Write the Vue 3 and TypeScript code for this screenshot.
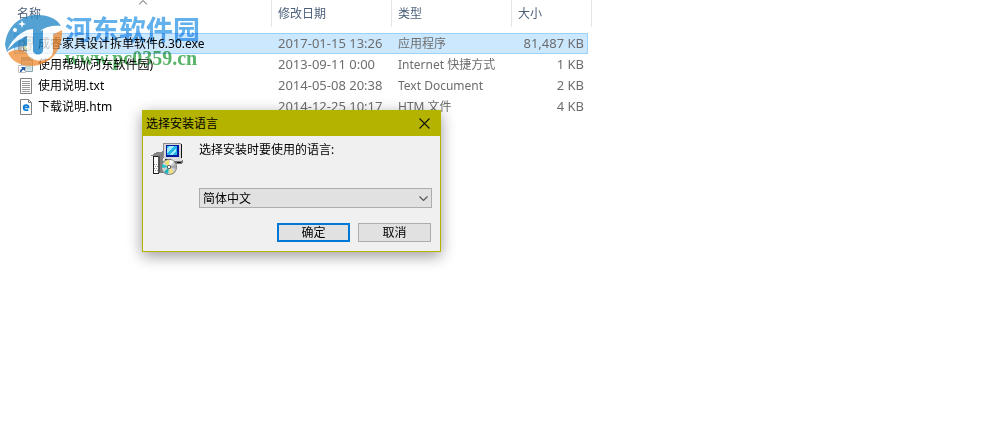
<script setup lang="ts">
import { ref } from 'vue'

interface FileEntry {
  name: string
  date: string
  type: string
  size: string
  icon: 'setup' | 'shortcut' | 'text' | 'html'
}

const files: FileEntry[] = [
  { name: '成睿家具设计拆单软件6.30.exe', date: '2017-01-15 13:26', type: '应用程序', size: '81,487 KB', icon: 'setup' },
  { name: '使用帮助(河东软件园)', date: '2013-09-11 0:00', type: 'Internet 快捷方式', size: '1 KB', icon: 'shortcut' },
  { name: '使用说明.txt', date: '2014-05-08 20:38', type: 'Text Document', size: '2 KB', icon: 'text' },
  { name: '下载说明.htm', date: '2014-12-25 10:17', type: 'HTM 文件', size: '4 KB', icon: 'html' },
]
const selected = ref(0)
const language = ref('zh')
</script>

<template>
  <main class="explorer">
    <table class="files">
      <colgroup>
        <col class="c-name"><col class="c-date"><col class="c-type"><col class="c-size"><col class="c-end">
      </colgroup>
      <thead>
        <tr>
          <th scope="col">名称
            <svg class="sort" width="9" height="5" viewBox="0 0 9 5"><path d="M.5 4.5l4-4 4 4" fill="none" stroke="#555" /></svg>
          </th>
          <th scope="col">修改日期</th>
          <th scope="col">类型</th>
          <th scope="col" colspan="2">大小</th>
        </tr>
      </thead>
      <tbody>
        <tr v-for="(f, i) in files" :key="f.name" :class="{ selected: i === selected }" @click="selected = i">
          <td class="name">
            <span class="file">
              <svg v-if="f.icon === 'setup'" width="16" height="16" viewBox="0 0 16 16">
                <path d="M6 1h9v7H6z" fill="#d8d8d8" stroke="#555" /><path d="M8 3h5v3H8z" fill="#2ba9e0" />
                <path d="M1 5h5v10H1z" fill="#eee" stroke="#666" /><path d="M3 5v10" stroke="#888" />
                <circle cx="9" cy="11" r="4" fill="#c8d8b0" stroke="#777" /><circle cx="9" cy="11" r="1" fill="#fff" />
              </svg>
              <svg v-else-if="f.icon === 'shortcut'" width="16" height="16" viewBox="0 0 16 16">
                <path d="M3.500.500h11v14h-11z" fill="#d5e8ee" stroke="#8aa6b1" /><path d="M4 1h10v3H4z" fill="#8bb9ca" />
                <path d="M6 7h7M6 9h7M6 11h7" stroke="#aec7cf" />
                <path d="M.5 8.500h7v7h-7z" fill="#fff" stroke="#c2c2c2" /><path d="M2 15c0-2 .7-3 2.500-3.500L3 10h4v4l-1.300-1.300C4 13 3.500 14 3.500 15z" fill="#1c56a8" />
              </svg>
              <svg v-else-if="f.icon === 'text'" width="16" height="16" viewBox="0 0 16 16">
                <path d="M2.500.500h11v15h-11z" fill="#fff" stroke="#808080" />
                <path d="M4 3.500h8M4 5.500h8M4 7.500h8M4 9.500h8M4 11.500h8M4 13.500h8" stroke="#9b9b9b" />
              </svg>
              <svg v-else width="16" height="16" viewBox="0 0 16 16">
                <path d="M2.500.500h8l3 3v12h-11z" fill="#fff" stroke="#808080" /><path d="M10.500.500v3h3" fill="none" stroke="#808080" />
                <path d="M5.500 8.500h5c0-3-4.600-3.200-4.900 0-.1 2.700 2.500 3.300 4.600 2.200" fill="none" stroke="#0b7bd6" stroke-width="1.700" />
              </svg>
              <span>{{ f.name }}</span>
            </span>
          </td>
          <td>{{ f.date }}</td>
          <td class="type">{{ f.type }}</td>
          <td class="size">{{ f.size }}</td>
        </tr>
      </tbody>
    </table>

    <div class="watermark">
      <svg class="logo" width="60" height="56" viewBox="0 0 60 56">
        <path d="M1 33C3 13 17 3 34 3c11 0 19 4 23 11l-10 2-1 26-8 5-10-1-5-12c-8 0-14 1-20 6z" fill="#1b83c6" />
        <path d="M4 41c6-4 12-4 18-1 5 7 16 9 22 2 4-5 4-12 4-19l10-5c1 17-8 31-23 35-12 3-26-1-31-12z" fill="#f08a30" />
        <path d="M3 39c4-10 11-17 20-21l6-1v21c0 6 10 6 10 0V18l-3 1c6-5 14-6 22-5l-1 3-8 2v20c0 12-24 13-26 1V24C15 27 8 32 3 39z" fill="#fff" />
        <path d="M18 8l1 3 3 1-3 1-1 3-1-3-3-1 3-1z" fill="#fff" /><circle cx="11" cy="18" r="2" fill="#fff" />
      </svg>
      <div class="words">
        <div class="brand">河东软件园</div>
        <div class="site">www.pc0359.cn</div>
      </div>
    </div>

    <section class="dialog" role="dialog" aria-labelledby="dialog-title">
      <header>
        <span id="dialog-title">选择安装语言</span>
        <button class="close" type="button" aria-label="关闭">
          <svg width="11" height="11" viewBox="0 0 11 11"><path d="M.5.500l10 10M10.500.500l-10 10" stroke="#111" stroke-width="1.100" /></svg>
        </button>
      </header>
      <form class="body" @submit.prevent>
        <svg class="installer" width="32" height="32" viewBox="0 0 32 32" shape-rendering="crispEdges">
          <path d="M13 1h17v15H13z" fill="#d6d6d6" /><path d="M12 0h18v1H13v14h-1z" fill="#8c8c8c" />
          <path d="M30 1h1v16H14v-1h16z" fill="#111" /><path d="M15 2h13v12H15z" fill="#0018a0" />
          <path d="M16 3h10v9H16z" fill="#22b5ea" /><path d="M18 3h5l-7 7V5zM25 5v3l-4 4h-3z" fill="#9be8fa" />
          <path d="M19 17h13v3l-3 1h-5z" fill="#777" /><path d="M20 15h11v3H20z" fill="#ddd" /><path d="M26 19h4v1h-4z" fill="#111" />
          <path d="M8 10l4-2v22H8z" fill="#808080" />
          <path d="M2 13h6v18H2z" fill="#222" /><path d="M3 14h5v16H3z" fill="#fff" />
          <path d="M1 12l5-3h6v1l-4 3H0v-1z" fill="#858585" /><path d="M7 13h2v17H7z" fill="#555" />
          <path d="M3 21h1v1H3zM5 21h1v1H5zM4 23h1v1H4zM6 23h1v1H6zM3 25h1v1H3zM5 25h1v1H5zM4 27h1v1H4zM6 27h1v1H6z" fill="#999" />
          <g shape-rendering="auto">
            <circle cx="18" cy="24" r="8" fill="#777" /><circle cx="18" cy="24" r="7.200" fill="#d0d0d0" />
            <path d="M18 24l-5-5 5-2z" fill="#f0e46e" /><path d="M18 24l1-7 4 1z" fill="#fff" />
            <path d="M18 24l7-3v5z" fill="#a9a9a9" /><path d="M18 24l5 5-4 2z" fill="#efe572" />
            <path d="M18 24l-1 7-4-2z" fill="#19b6be" /><path d="M18 24l-7 1v-4z" fill="#26c3c9" />
            <circle cx="18" cy="24" r="2" fill="#444" /><circle cx="18" cy="24" r="1.200" fill="#fff" />
          </g>
        </svg>
        <div class="fields">
          <label for="language">选择安装时要使用的语言:</label>
          <div class="select">
            <select id="language" v-model="language">
              <option value="zh">简体中文</option>
            </select>
            <svg width="9" height="6" viewBox="0 0 9 6"><path d="M.5.500l4 4 4-4" fill="none" stroke="#555" stroke-width="1.200" /></svg>
          </div>
          <div class="actions">
            <button class="primary" type="submit">确定</button>
            <button type="button">取消</button>
          </div>
        </div>
      </form>
    </section>
  </main>
</template>

<style>
body { margin: 0; background: #fff; }
</style>

<style scoped>
.explorer {
  position: relative;
  min-height: 100vh;
  overflow: hidden;
  font: 12px/19px "Noto Sans", "Noto Sans CJK SC", sans-serif;
  color: #6d6d6d;
}
.files { width: 578px; margin-left: 14px; table-layout: fixed; border-collapse: separate; border-spacing: 0; }
.c-name { width: 258px; }
.c-date, .c-type { width: 120px; }
.c-size { width: 76px; }
.c-end { width: 4px; }
th {
  position: relative;
  height: 27px;
  padding: 0 0 0 6px;
  box-sizing: border-box;
  border-right: 1px solid #e5e5e5;
  color: #4c607a;
  font-weight: 400;
  text-align: left;
}
th:first-child { padding-left: 3px; }
.sort { position: absolute; top: 0; left: 50%; transform: translateX(-50%); }
thead::after { content: ""; display: block; height: 6px; }
td { height: 21px; padding: 0 0 0 6px; box-sizing: border-box; border: solid transparent; border-width: 1px 0; font-size: 13px; white-space: nowrap; }
.name { padding-left: 3px; border-left-width: 1px; font-size: 12px; color: #000; }
.type { font-size: 12px; }
.size { padding-right: 3px; border-right-width: 1px; text-align: right; }
.selected td { border-color: #99d1ff; background: #cce8ff; }
.file { display: flex; align-items: center; gap: 4px; }
.watermark { position: absolute; left: 4px; top: 12px; display: flex; gap: 1px; pointer-events: none; }
.logo { opacity: .75; }
.words { padding-top: 2px; mix-blend-mode: multiply; }
.brand { font: 700 27px/30px "Noto Sans CJK SC", sans-serif; color: #62b0ec; }
.site { font: 700 20px/28px "Liberation Serif", serif; color: #58b468; }
.dialog {
  position: absolute;
  left: 142px;
  top: 110px;
  width: 297px;
  border: 1px solid #b4b400;
  background: #f0f0f0;
  box-shadow: 0 4px 14px rgba(0, 0, 0, .4);
  color: #000;
}
header { display: flex; align-items: center; justify-content: space-between; height: 25px; padding: 0 10px 0 3px; background: #b4b400; }
button, select { font: inherit; color: #000; }
.close { display: flex; padding: 0; border: 0; background: none; }
.body { display: flex; gap: 16px; padding: 4px 8px 9px 8px; }
.installer { flex: none; margin-top: 3px; }
.fields { flex: 1; }
label { display: block; }
.select { position: relative; margin-top: 29px; }
select { display: block; width: 100%; height: 20px; padding: 0 3px; border: 1px solid #adadad; border-radius: 0; background: #e1e1e1; appearance: none; }
.select svg { position: absolute; right: 4px; top: 8px; pointer-events: none; }
.actions { display: flex; justify-content: flex-end; gap: 8px; margin-top: 15px; padding-right: 1px; }
.actions button { width: 73px; height: 19px; padding: 0; border: 1px solid #adadad; background: #e1e1e1; line-height: 15px; }
.actions .primary { border: 2px solid #0078d7; }
</style>
